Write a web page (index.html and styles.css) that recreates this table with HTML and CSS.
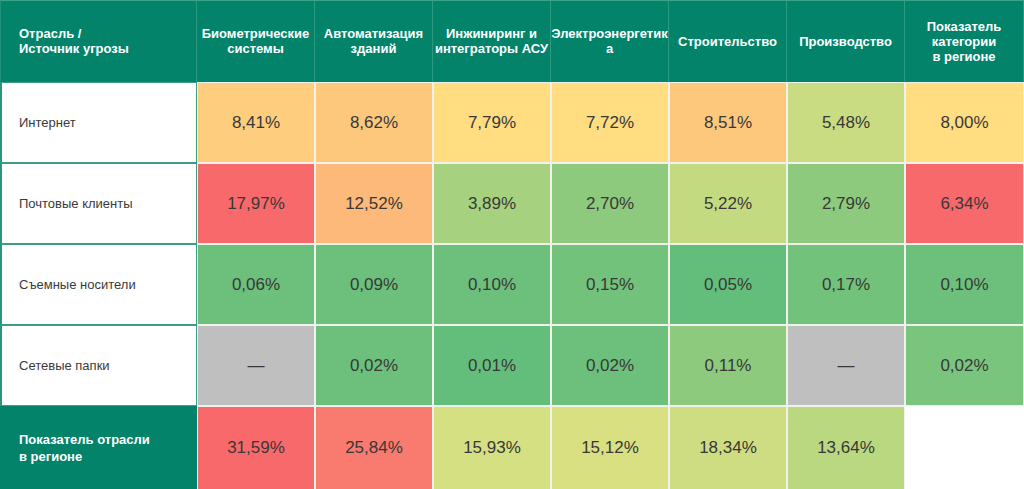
FILE: index.html
```html
<!DOCTYPE html>
<html lang="ru">
<head>
<meta charset="utf-8">
<link rel="stylesheet" href="styles.css">
</head>
<body>
<table class="heat">
  <colgroup>
    <col class="c-first">
    <col class="c"><col class="c"><col class="c"><col class="c"><col class="c"><col class="c"><col class="c-last">
  </colgroup>
  <thead>
    <tr class="r-head">
      <th class="th-first">Отрасль /<br>Источник угрозы</th>
      <th>Биометрические системы</th>
      <th>Автоматизация зданий</th>
      <th>Инжиниринг и интеграторы АСУ</th>
      <th>Электроэнергетик а</th>
      <th>Строительство</th>
      <th>Производство</th>
      <th>Показатель категории<br>в регионе</th>
    </tr>
  </thead>
  <tbody>
    <tr class="r">
      <td class="lbl">Интернет</td>
      <td class="v o1">8,41%</td>
      <td class="v o2">8,62%</td>
      <td class="v y1">7,79%</td>
      <td class="v y1">7,72%</td>
      <td class="v o2">8,51%</td>
      <td class="v g-lime">5,48%</td>
      <td class="v y1">8,00%</td>
    </tr>
    <tr class="r">
      <td class="lbl">Почтовые клиенты</td>
      <td class="v red">17,97%</td>
      <td class="v o3">12,52%</td>
      <td class="v g2">3,89%</td>
      <td class="v g3">2,70%</td>
      <td class="v g-lime2">5,22%</td>
      <td class="v g3">2,79%</td>
      <td class="v red">6,34%</td>
    </tr>
    <tr class="r">
      <td class="lbl">Съемные носители</td>
      <td class="v g5">0,06%</td>
      <td class="v g5">0,09%</td>
      <td class="v g5">0,10%</td>
      <td class="v g4">0,15%</td>
      <td class="v g6">0,05%</td>
      <td class="v g4">0,17%</td>
      <td class="v g5">0,10%</td>
    </tr>
    <tr class="r">
      <td class="lbl">Сетевые папки</td>
      <td class="v na">—</td>
      <td class="v g5">0,02%</td>
      <td class="v g6">0,01%</td>
      <td class="v g5">0,02%</td>
      <td class="v g3">0,11%</td>
      <td class="v na">—</td>
      <td class="v g4b">0,02%</td>
    </tr>
    <tr class="r r-last">
      <td class="lbl lbl-head">Показатель отрасли<br>в регионе</td>
      <td class="v red">31,59%</td>
      <td class="v salmon">25,84%</td>
      <td class="v ly1">15,93%</td>
      <td class="v ly2">15,12%</td>
      <td class="v ly3">18,34%</td>
      <td class="v ly4">13,64%</td>
      <td class="v empty"></td>
    </tr>
  </tbody>
</table>
</body>
</html>
```

FILE: styles.css
```css
html, body {
  margin: 0;
  padding: 0;
  background: #ffffff;
}

body {
  font-family: "Liberation Sans", Arial, sans-serif;
  color: #333333;
  overflow: hidden;
}

.heat {
  width: 1024px;
  table-layout: fixed;
  border-collapse: separate;
  border-spacing: 0;
}

.c-first { width: 197px; }
.c { width: 118px; }
.c-last { width: 119px; }

.r-head th {
  height: 82px;
  box-sizing: border-box;
  background: #02836a;
  color: #ffffff;
  font-size: 13px;
  font-weight: bold;
  line-height: 15px;
  text-align: center;
  vertical-align: middle;
  padding: 0;
  border-top: 1px solid #3aa48b;
  border-right: 1px solid #2c9a81;
  border-bottom: 1px solid #02836a;
}

.r-head .th-first {
  text-align: left;
  padding-left: 18px;
  border-left: 1px solid #1f9277;
}

.r td {
  height: 79px;
  padding: 0;
  border: 1px solid #f1f2ec;
  vertical-align: middle;
}

.r-last td {
  height: 82px;
}

.lbl {
  font-size: 13px;
  padding-left: 17px !important;
  background: #ffffff;
  color: #3a3a3a;
  border: 1px solid #3d9e86 !important;
  border-left: 2px solid #2a957c !important;
}

.lbl-head {
  background: #02836a;
  color: #ffffff;
  font-weight: bold;
  line-height: 17px;
  border-color: #02836a !important;
}

.v {
  text-align: center;
  font-size: 17px;
  color: #383838;
}

.o1 { background: #fecd7e; }
.o2 { background: #fec87c; }
.o3 { background: #fcb97a; }
.y1 { background: #ffdd80; }
.red { background: #f8696b; }
.salmon { background: #f97a6f; }
.g-lime { background: #c9dc82; }
.g-lime2 { background: #c4da81; }
.g2 { background: #a6d17e; }
.g3 { background: #8dca7d; }
.g4 { background: #73c27b; }
.g4b { background: #7ac57d; }
.g5 { background: #6cc07b; }
.g6 { background: #64be7b; }
.na { background: #bfbfbf; }
.ly1 { background: #d5e082; }
.ly2 { background: #d8e082; }
.ly3 { background: #cedd82; }
.ly4 { background: #b9d880; }
.empty { background: #ffffff; border-color: #ffffff !important; }
```
